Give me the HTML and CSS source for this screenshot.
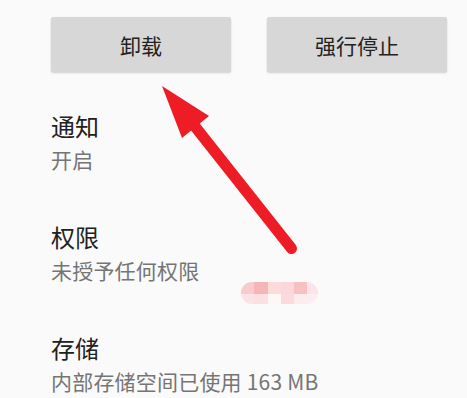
FILE: index.html
```html
<!DOCTYPE html>
<html>
<head>
    <title>应用信息</title>
    <link rel="stylesheet" href="styles.css">
</head>
<body>
    <div class="page">
        <div class="button-row">
            <button type="button" class="btn">卸载</button>
            <button type="button" class="btn">强行停止</button>
        </div>

        <div class="item item-first">
            <div class="item-title">通知</div>
            <div class="item-summary">开启</div>
        </div>
        <div class="item">
            <div class="item-title">权限</div>
            <div class="item-summary">未授予任何权限</div>
        </div>
        <div class="item">
            <div class="item-title">存储</div>
            <div class="item-summary">内部存储空间已使用 163 MB</div>
        </div>

        <!-- mosaic over hidden text -->
        <div class="mosaic">
            <span style="background:#f8cbcc"></span>
            <span style="background:#f5b6b8"></span>
            <span style="background:#fadcdb"></span>
            <span style="background:#fbd7dc"></span>
            <span style="background:#f7c1c1"></span>
            <span style="background:#fbe3ea"></span>
            <span style="background:#fbe2e6"></span>
            <span style="background:#fbdfe3"></span>
            <span style="background:#fdf8f5"></span>
            <span style="background:#fadadd"></span>
            <span style="background:#fcecee"></span>
            <span style="background:#fbeef0"></span>
        </div>

        <!-- red arrow annotation -->
        <svg class="arrow" width="467" height="398" viewBox="0 0 467 398">
            <line x1="193" y1="124" x2="291.5" y2="248.5" stroke="#ee1c25" stroke-width="11" stroke-linecap="round"/>
            <polygon points="162,86 209,116 182,138" fill="#ee1c25"/>
        </svg>
    </div>
</body>
</html>
```

FILE: styles.css
```css
html, body {
    margin: 0;
    padding: 0;
    background-color: #fafafa;
}
body {
    font-family: "Noto Sans CJK SC", "Noto Sans", Roboto, sans-serif;
    color: #212121;
    width: 467px;
    height: 398px;
    overflow: hidden;
}
.page {
    position: relative;
    height: 398px;
    padding: 17px 0 0 51px;
    box-sizing: border-box;
}
.button-row {
    display: flex;
    gap: 36px;
}
.btn {
    width: 180px;
    height: 55px;
    border: none;
    border-radius: 2px;
    background-color: #d6d7d6;
    box-shadow: 0 1px 2px rgba(0, 0, 0, 0.18);
    font-family: inherit;
    font-size: 21px;
    color: #222;
    padding: 0;
}
.item {
    padding-top: 40px;
    height: 71px;
}
.item-first {
    padding-top: 39px;
}
.item-title {
    font-size: 24px;
    line-height: 30px;
    color: #212121;
}
.item-summary {
    font-size: 21px;
    line-height: 28px;
    margin-top: 4px;
    color: #757575;
    letter-spacing: 0.2px;
}
.mosaic {
    position: absolute;
    left: 241px;
    top: 282px;
    width: 77px;
    height: 22px;
    border-radius: 11px;
    overflow: hidden;
    display: grid;
    grid-template-columns: 13px 14px 13px 13px 13px 11px;
    grid-template-rows: 12px 10px;
}
.arrow {
    position: absolute;
    left: 0;
    top: 0;
}
```
